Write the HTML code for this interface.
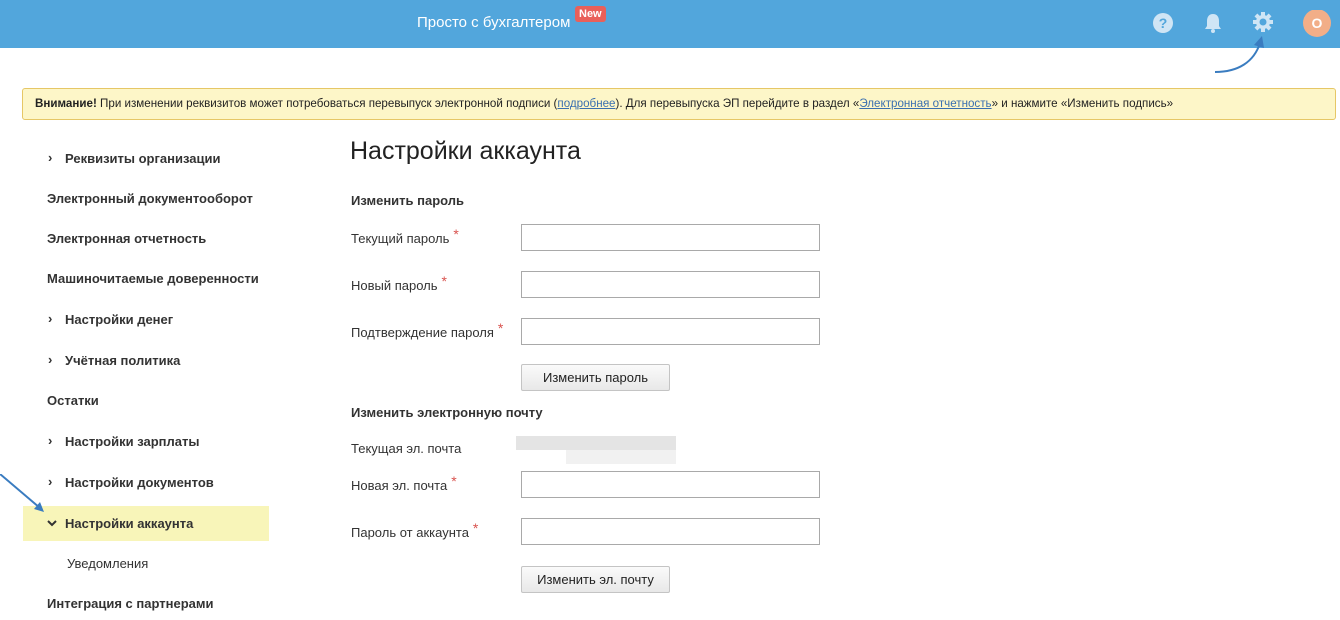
<!DOCTYPE html><html><head><meta charset="utf-8"><style>
body{margin:0;width:1340px;height:620px;background:#fff;font-family:"Liberation Sans",Arial,sans-serif;color:#333;position:relative;overflow:hidden}
.a{position:absolute}
.hdr{left:0;top:0;width:1340px;height:48px;background:#52a6dc}
.nav{font-size:13px;font-weight:bold;color:#333;white-space:nowrap}
.lbl{font-size:13px;color:#333;white-space:nowrap}
.st{color:#d9534f;font-size:14px;position:relative;top:-4px;margin-left:4px}
.inp{width:297px;height:25px;border:1px solid #a9a9a9;background:#fff}
.btn{width:147px;height:25px;border:1px solid #c4c4c4;border-radius:2px;background:linear-gradient(#fafafa,#e8e8e8);font-size:13px;text-align:center;line-height:25px;color:#222}
.chev{position:absolute;left:48px;font-size:13px;font-weight:bold;color:#333}
</style></head><body>
<div class="a hdr"></div>
<div class="a" style="left:417px;top:14px;font-size:15px;color:#fff">Просто с бухгалтером</div>
<div class="a" style="left:575px;top:6px;background:#e9605a;color:#fff;font-size:11px;font-weight:bold;padding:2px 4px;border-radius:3px">New</div>
<svg class="a" style="left:1150px;top:10px" width="190" height="30" viewBox="0 0 190 30">
<circle cx="13" cy="13" r="10" fill="#cfe5f5"/><text x="13" y="18" text-anchor="middle" font-size="14" font-weight="bold" fill="#52a6dc" font-family="Liberation Sans">?</text>
<path d="M63 4c-4 0-6 3-6 7v5l-2 3h16l-2-3v-5c0-4-2-7-6-7z" fill="#cfe5f5"/><circle cx="63" cy="21" r="2" fill="#cfe5f5"/>
<g transform="translate(113 12)" fill="#cfe5f5"><circle r="7"/><g><rect x="-2" y="-10" width="4" height="20"/><rect x="-2" y="-10" width="4" height="20" transform="rotate(45)"/><rect x="-2" y="-10" width="4" height="20" transform="rotate(90)"/><rect x="-2" y="-10" width="4" height="20" transform="rotate(135)"/></g><circle r="3.5" fill="#52a6dc"/></g>
<circle cx="167" cy="13" r="14" fill="#f2ae88"/><text x="167" y="18" text-anchor="middle" font-size="14" font-weight="bold" fill="#fff" font-family="Liberation Sans">О</text>
</svg>
<svg class="a" style="left:1210px;top:34px" width="60" height="42"><path d="M5 38C28 38 44 28 50 9" stroke="#3a7cc0" stroke-width="2" fill="none"/><path d="M44 11l8-9 2 12z" fill="#3a7cc0"/></svg>
<div class="a" style="left:22px;top:88px;width:1312px;height:30px;background:#fdf6c8;border:1px solid #e6c766;border-radius:3px;font-size:11.6px;line-height:30px;color:#222;white-space:nowrap"><span style="margin-left:12px"><b>Внимание!</b> При изменении реквизитов может потребоваться перевыпуск электронной подписи (<u style="color:#3a6fb0">подробнее</u>). Для перевыпуска ЭП перейдите в раздел «<u style="color:#3a6fb0">Электронная отчетность</u>» и нажмите «Изменить подпись»</span></div>
<div class="a" style="left:23px;top:506px;width:246px;height:35px;background:#f8f5b9"></div>
<svg class="a" style="left:0;top:474px" width="70" height="60"><path d="M0 0L40 34" stroke="#3a7cc0" stroke-width="2"/><path d="M34 35l10 3-4-10z" fill="#3a7cc0"/></svg>
<div class="a chev" style="top:150px">›</div><div class="a nav" style="left:65px;top:151px">Реквизиты организации</div>
<div class="a nav" style="left:47px;top:191px">Электронный документооборот</div>
<div class="a nav" style="left:47px;top:231px">Электронная отчетность</div>
<div class="a nav" style="left:47px;top:271px">Машиночитаемые доверенности</div>
<div class="a chev" style="top:311px">›</div><div class="a nav" style="left:65px;top:312px">Настройки денег</div>
<div class="a chev" style="top:352px">›</div><div class="a nav" style="left:65px;top:353px">Учётная политика</div>
<div class="a nav" style="left:47px;top:393px">Остатки</div>
<div class="a chev" style="top:433px">›</div><div class="a nav" style="left:65px;top:434px">Настройки зарплаты</div>
<div class="a chev" style="top:474px">›</div><div class="a nav" style="left:65px;top:475px">Настройки документов</div>
<svg class="a" style="left:47px;top:519px" width="10" height="8"><path d="M1 2l4 4 4-4" stroke="#333" stroke-width="2" fill="none"/></svg><div class="a nav" style="left:65px;top:516px">Настройки аккаунта</div>
<div class="a lbl" style="left:67px;top:556px">Уведомления</div>
<div class="a nav" style="left:47px;top:596px">Интеграция с партнерами</div>
<div class="a" style="left:350px;top:137px;font-size:25px;color:#222">Настройки аккаунта</div>
<div class="a nav" style="left:351px;top:193px">Изменить пароль</div>
<div class="a lbl" style="left:351px;top:230px">Текущий пароль<span class="st">*</span></div>
<div class="a inp" style="left:521px;top:224px"></div>
<div class="a lbl" style="left:351px;top:277px">Новый пароль<span class="st">*</span></div>
<div class="a inp" style="left:521px;top:271px"></div>
<div class="a lbl" style="left:351px;top:324px">Подтверждение пароля<span class="st">*</span></div>
<div class="a inp" style="left:521px;top:318px"></div>
<div class="a btn" style="left:521px;top:364px">Изменить пароль</div>
<div class="a nav" style="left:351px;top:405px">Изменить электронную почту</div>
<div class="a lbl" style="left:351px;top:441px">Текущая эл. почта</div>
<div class="a" style="left:516px;top:436px;width:160px;height:14px;background:#e4e4e4"></div>
<div class="a" style="left:566px;top:450px;width:110px;height:14px;background:#f1f1f1"></div>
<div class="a lbl" style="left:351px;top:477px">Новая эл. почта<span class="st">*</span></div>
<div class="a inp" style="left:521px;top:471px"></div>
<div class="a lbl" style="left:351px;top:524px">Пароль от аккаунта<span class="st">*</span></div>
<div class="a inp" style="left:521px;top:518px"></div>
<div class="a btn" style="left:521px;top:566px">Изменить эл. почту</div>
</body></html>
